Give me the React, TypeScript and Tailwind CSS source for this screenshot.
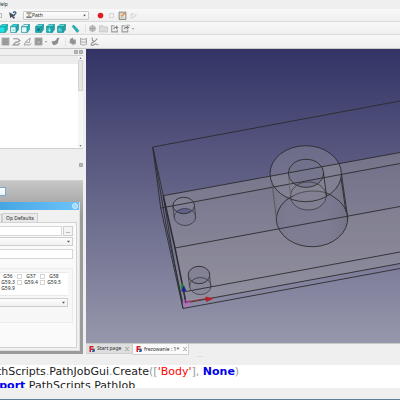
import type { ReactNode } from 'react'

function ToolButton({ label, children }: { label: string; children: ReactNode }) {
  return (
    <button type="button" aria-label={label} className="flex w-[9px] shrink-0 justify-center">
      <svg viewBox="0 0 16 16" aria-hidden className="h-[9px] w-[9px] shrink-0">
        {children}
      </svg>
    </button>
  )
}

function Separator() {
  return <span className="h-2 w-px shrink-0 bg-[#e2e2e2]" />
}

// Isometric cube, one face painted in the light colour
function Cube({ face }: { face: 'all' | 'front' | 'top' | 'right' | 'rear' | 'bottom' | 'left' }) {
  const on = '#22e3e6'
  const off = '#e4fafa'
  const dark = '#128a92'
  const front = face === 'all' ? on : face === 'top' || face === 'right' ? off : '#1fb3b8'
  const top = face === 'top' || face === 'all' ? on : face === 'right' ? off : '#5fe0e2'
  const side = face === 'right' || face === 'all' ? '#14c9ce' : '#2aa4a9'
  return (
    <g stroke={dark} strokeWidth="1.2" strokeLinejoin="round">
      <path d="M1 5 5 1h10l-4 4z" fill={top} />
      <path d="M1 5h10v10H1z" fill={front} />
      <path d="m11 5 4-4v9l-4 5z" fill={side} />
      {face === 'rear' && <path d="M4 8h4v4H4z" fill="#0a666d" />}
      {face === 'bottom' && <path d="M3 11h6M6 7v7" stroke="#b9f6f5" />}
      {face === 'left' && <path d="M4 7v6M7 9v4" stroke="#b9f6f5" />}
      {face === 'top' && <path d="M4 11h4" stroke="#22c3c6" />}
    </g>
  )
}

function MenuAndToolbars() {
  return (
    <header className="shrink-0">
      <nav className="flex h-[9px] items-center bg-[#efefef]">
        <a href="#help" className="-ml-[3px]">Help</a>
      </nav>

      <div className="flex h-[13px] items-center border-b border-[#dadada] bg-linear-to-b from-[#f8f8f8] to-[#efefef]">
        <span className="h-[5px] w-0.5 border-y border-r border-[#bbb]" />
        <div className="ml-1.5">
          <ToolButton label="What's this?">
            <path d="m2 2 2 11 3-3 3 4 2-2-3-3 4-1z" fill="#4a5058" />
            <path d="M9 3c1-2 6-2 5 1 0 2-3 1-3 4M11 10v2" fill="none" stroke="#285080" strokeWidth="2" />
          </ToolButton>
        </div>
        <div className="relative ml-1.5 flex h-[9px] w-[66px] items-center rounded-[1px] border border-[#cacaca] bg-linear-to-b from-[#fdfdfd] to-[#f0f0f0]">
          <svg viewBox="0 0 16 16" className="pointer-events-none absolute left-0.5 h-[6px] w-[6px]">
            <path d="M1 1h14v3H1zM1 12h14v3H1z" fill="#555" />
            <path d="M5 4h6v3H5z" fill="#d79b3e" />
            <path d="m5 7 3 5 3-5z" fill="#8b99a5" />
          </svg>
          <select aria-label="Workbench" className="h-[7px] w-full appearance-none pl-2 text-[5px] leading-[7px]">
            <option>Path</option>
          </select>
          <svg viewBox="0 0 16 16" className="pointer-events-none absolute right-0.5 h-[3px] w-[3px]">
            <path d="M1 4h14l-7 9z" fill="#444" />
          </svg>
        </div>
        <div className="ml-[7px] flex items-center gap-0.5">
          <ToolButton label="Record macro">
            <circle cx="8" cy="8" r="5" fill="#e01b24" />
          </ToolButton>
          <ToolButton label="Stop recording">
            <path d="M4.500 4.500h7v7h-7z" fill="#f6f6f6" stroke="#d0d0d0" strokeWidth="1.500" />
          </ToolButton>
          <ToolButton label="Edit macro">
            <path d="M2 2h12v13H2z" fill="#e6e6e2" stroke="#77776f" strokeWidth="1.500" />
            <path d="M4 5h6M4 8h4M4 12h7" stroke="#aaa" />
            <path d="m6 10 7-7" stroke="#f08b25" strokeWidth="2.500" />
          </ToolButton>
          <ToolButton label="Run macro">
            <path d="m4 4 9 4-9 5z" fill="#f2f2f2" stroke="#d0d0d0" strokeWidth="1.500" />
          </ToolButton>
        </div>
      </div>

      <div className="flex h-[13px] items-center border-b border-[#dadada] bg-linear-to-b from-[#f8f8f8] to-[#efefef]">
        <div className="-ml-px flex gap-0.5">
          <ToolButton label="Front"><Cube face="all" /></ToolButton>
          <ToolButton label="Top"><Cube face="top" /></ToolButton>
          <ToolButton label="Right"><Cube face="right" /></ToolButton>
        </div>
        <div className="ml-[5px] flex gap-0.5">
          <ToolButton label="Rear"><Cube face="rear" /></ToolButton>
          <ToolButton label="Bottom"><Cube face="bottom" /></ToolButton>
          <ToolButton label="Left"><Cube face="left" /></ToolButton>
        </div>
        <div className="ml-[5px] flex items-center gap-[5px]">
          <ToolButton label="Measure">
            <path d="m2 4 3-2 9 10-3 3z" fill="#17c5ca" stroke="#0d7880" strokeWidth="1" />
            <path d="m8 5-2 2M11 8l-2 2" stroke="#0d7880" />
          </ToolButton>
          <Separator />
        </div>
        <div className="ml-0.5 flex items-center gap-0.5">
          <ToolButton label="Job">
            <path d="m8 1 6 4v6l-6 4-6-4V5z" fill="#c4c4c4" />
            <path d="M5 5v7M8 3v10M11 5v7M3 8h10" stroke="#999" />
          </ToolButton>
          <ToolButton label="Group">
            <path d="M1 3h6l1 2h7v9H1z" fill="#dcdcdc" stroke="#bababa" />
          </ToolButton>
          <ToolButton label="Export">
            <path d="M8 3H3v11h10v-4" fill="none" stroke="#9a9a9a" strokeWidth="2" />
            <path d="M6 10c0-4 2-5 5-5V2l4 4-4 4V7c-2 0-3 1-5 3z" fill="#858585" />
          </ToolButton>
          <ToolButton label="Make link">
            <path d="M8 3H2v11h10v-4" fill="none" stroke="#9a9a9a" strokeWidth="2" />
            <path d="M5 10c0-4 2-5 5-5V2l5 4-5 4V7c-2 0-3 1-5 3z" fill="#858585" />
            <path d="M10 2h5v2" stroke="#777" fill="none" />
          </ToolButton>
          <span className="text-[4px] text-[#999]">▾</span>
        </div>
      </div>

      <div className="flex h-[14px] items-center border-b border-[#c8c8c8] bg-linear-to-b from-[#f8f8f8] to-[#efefef] pl-px">
        <div className="flex items-center gap-0.5">
          <ToolButton label="Pocket">
            <path d="M1 1h14v14H1z" fill="#a9a9a9" />
            <path d="M3 4h10M3 7h10M3 10h10M3 13h10" stroke="#808080" />
          </ToolButton>
          <ToolButton label="Contour">
            <path d="M2 3h8l4 3-4 3H7l-5 5h9l3-3" fill="none" stroke="#949494" strokeWidth="2" />
          </ToolButton>
          <ToolButton label="Engrave">
            <path d="M13 2 5 8l-3 6h10l3-3M5 9l6 1 2-8" fill="none" stroke="#949494" strokeWidth="1.500" />
          </ToolButton>
          <ToolButton label="Pocket 3D">
            <path d="M1 1h14v14H1z" fill="#a3a3a3" />
            <path d="M4 4h8M4 7h8v5H4z" fill="#b4b4b4" stroke="#808080" />
          </ToolButton>
          <span className="w-1 text-[4px] text-[#999]">▾</span>
          <ToolButton label="Surface">
            <path d="M1 7c4 1 7 0 9-3V2l5-1-2 6c0 5-5 8-9 7l-2-3z" fill="#8d8d8d" />
          </ToolButton>
        </div>
        <div className="ml-[5px] flex items-center gap-0.5">
          <Separator />
          <ToolButton label="Inspect">
            <path d="m3 4 6-3v4l5-1v9l-3-1v3l-4-2-6-4 3-1z" fill="#a0a0a0" />
            <path d="M5 4h5M3 7h9M6 10h7" stroke="#777" />
          </ToolButton>
          <ToolButton label="Simulator">
            <path d="M2 2c3 3 9 3 12 0M2 7c3 3 9 3 12 0M2 12c3 3 9 3 12 0M3 2v11M13 2v11" fill="none" stroke="#999" strokeWidth="1.500" />
          </ToolButton>
          <ToolButton label="Toolbits">
            <path d="M4 1v5l4 2-5 3-1 3 3 1 4-3 6 2M13 3 8 8" fill="none" stroke="#8c8c8c" strokeWidth="1.800" />
          </ToolButton>
        </div>
      </div>
    </header>
  )
}

function DockButton({ label }: { label: string }) {
  return (
    <button type="button" aria-label={label} className="block h-1 w-1">
      <svg viewBox="0 0 8 8" className="block h-1 w-1">
        <path d="M1 1h6v6H1z" fill="#ddd" stroke="#909090" strokeWidth="1.500" />
        <path d="m2 2 4 4m0-4L2 6" stroke="#909090" />
      </svg>
    </button>
  )
}

function TreeDock() {
  return (
    <section className="mr-[3px] shrink-0">
      <div className="flex h-[7px] items-center justify-end gap-px border-b border-[#d4d4d4]">
        <DockButton label="Float tree view" />
        <DockButton label="Close tree view" />
      </div>
      <div className="flex h-[93px] border-b border-[#d0d0d0]">
        <div className="flex min-w-0 flex-1 flex-col">
          <div className="h-2 bg-[#ededed]" />
          <div className="flex-1 bg-white" />
        </div>
        <div className="flex w-[5px] flex-col items-center bg-[#f6f6f6]">
          <svg viewBox="0 0 8 8" className="h-1 w-[3px]"><path d="m1 6 3-4 3 4z" fill="#555" /></svg>
          <div className="h-[31px] w-[5px] border border-[#d2d2d2] bg-[#e5e5e5]" />
          <svg viewBox="0 0 8 8" className="mt-auto h-1 w-[3px]"><path d="m1 2 3 4 3-4z" fill="#555" /></svg>
        </div>
      </div>
      <div className="flex h-[31px] items-center justify-end">
        <DockButton label="Close task view" />
      </div>
    </section>
  )
}

function CoordCell({ name }: { name: string }) {
  return (
    <label className="flex h-[6px] items-center gap-0.5">
      <input
        type="checkbox"
        className="h-[5px] w-[5px] shrink-0 appearance-none border border-[#d6d6d6] bg-white"
      />
      <span className="w-[14px] text-center leading-[6px]">{name}</span>
    </label>
  )
}

function DropDown({ label }: { label: string }) {
  return (
    <div className="relative">
      <select aria-label={label} className="block h-[9px] w-full appearance-none rounded-r-[1px] border border-l-0 border-[#cecece] bg-linear-to-b from-[#fdfdfd] to-[#f0f0f0]" />
      <svg viewBox="0 0 8 8" className="pointer-events-none absolute top-[3px] right-[3px] h-[3px] w-[3px]">
        <path d="M0 2h8L4 7z" fill="#555" />
      </svg>
    </div>
  )
}

function TaskDock() {
  return (
    <section className="mr-[3px] flex flex-1 flex-col border-t border-[#d0d0d0] bg-linear-to-b from-[#c6c6c6] to-[#9b9b9b] to-20% pr-[3px] pb-[3px]">
      <div className="flex h-[21px] items-center">
        <button type="button" aria-label="OK" className="h-[9px] w-[6px] border border-l-0 border-[#77abc7] bg-linear-to-b from-white to-[#e7f2f8]" />
      </div>
      <div className="flex flex-1 flex-col border-r border-b border-[#ddd] bg-[#f1f1f1]">
        <div className="flex h-2 items-center justify-end bg-linear-to-r from-[#45a6e3] to-[#6bc3fa] pr-px">
          <button type="button" aria-label="Collapse" className="block">
            <svg viewBox="0 0 12 12" className="block h-[6px] w-[6px]">
              <circle cx="6" cy="6" r="5" fill="#82cdfa" stroke="#fff" strokeWidth="1.500" />
              <path d="m4 6 2-2 2 2M4 9l2-2 2 2" stroke="#fff" fill="none" />
            </svg>
          </button>
        </div>
        <div className="flex h-3 items-end" role="tablist">
          <span className="h-2 w-0.5 border border-b-0 border-l-0 border-[#ccc]" />
          <button type="button" role="tab" className="h-[9px] w-9 border border-b-0 border-[#cfcfcf] bg-[#e9e9e9] leading-[9px] whitespace-nowrap">
            Op Defaults
          </button>
        </div>
        <div className="mr-0.5 mb-0.5 flex-1 border border-l-0 border-[#d2d2d2] bg-[#fafafa] pr-[3px]">
          <div className="mt-[3px] flex gap-px">
            <input type="text" aria-label="Output file" className="h-[10px] min-w-0 flex-1 border border-l-0 border-[#d6d6d6] bg-white" />
            <button type="button" className="h-[10px] w-[10px] border border-[#cfcfcf] bg-[#f4f4f4] leading-2">...</button>
          </div>
          <div className="mt-px"><DropDown label="Processor" /></div>
          <input type="text" aria-label="Arguments" className="mt-[3px] block h-[10px] w-full border border-l-0 border-[#d6d6d6] bg-white" />
          <div className="mt-[9px] h-[55px] border border-l-0 border-[#ececec] bg-[#f7f7f7] pt-[3px] pr-1">
            <div className="h-6 overflow-hidden border-y border-[#eaeaea] bg-white">
              <div className="-ml-[6px] grid grid-cols-[repeat(3,23px)]">
                <CoordCell name="G56" />
                <CoordCell name="G57" />
                <CoordCell name="G58" />
                <CoordCell name="G59.3" />
                <CoordCell name="G59.4" />
                <CoordCell name="G59.5" />
                <CoordCell name="G59.9" />
              </div>
            </div>
            <div className="mt-0.5"><DropDown label="Order by" /></div>
          </div>
        </div>
      </div>
    </section>
  )
}

function Viewport() {
  return (
    <svg
      viewBox="86 49 314 294"
      preserveAspectRatio="xMinYMin slice"
      role="img"
      aria-label="3D view of the model"
      className="block min-h-0 w-full flex-1"
    >
      <defs>
        <linearGradient id="sky" x1="0" y1="0" x2="0" y2="1">
          <stop offset="0" stopColor="#333366" />
          <stop offset="1" stopColor="#9797ac" />
        </linearGradient>
        <linearGradient id="wall" x1="0" y1="0" x2="1" y2="0">
          <stop offset="0" stopColor="#77767f" stopOpacity="0.65" />
          <stop offset="0.300" stopColor="#85859a" stopOpacity="0.350" />
          <stop offset="0.700" stopColor="#85859a" stopOpacity="0.250" />
          <stop offset="1" stopColor="#6d6c77" stopOpacity="0.700" />
        </linearGradient>
      </defs>
      <path d="M86 49h314v295H86z" fill="url(#sky)" />

      {/* stock and plate faces */}
      <path d="M163.300 195.700 400 152.500V263.500L185 303z" fill="#a19f9c" fillOpacity="0.360" />
      <path d="M163.300 195.700 400 152.500V163.500L165 207z" fill="#8b8997" fillOpacity="0.120" />
      <path d="m175 248 225-41.500V252l-214 39.500z" fill="#9c9492" fillOpacity="0.140" />

      {/* hub */}
      <ellipse cx="305.700" cy="173.700" rx="35.700" ry="28" fill="#8e8d9a" fillOpacity="0.420" />
      <path d="M271 180 276.300 218a35.700 28 0 0 0 71.400 0L341.400 173.700a35.700 28 0 0 1-70.400 6z" fill="url(#wall)" />
      <ellipse cx="312" cy="218.500" rx="35.700" ry="28.200" fill="#74748f" fillOpacity="0.400" />
      <path d="M288.500 173.500a17.500 14 0 0 1 35 0l3 23a18 14 0 0 1-36 0z" fill="#878591" fillOpacity="0.550" />
      <ellipse cx="306" cy="173.300" rx="17.500" ry="14" fill="#65658a" fillOpacity="0.450" />

      {/* screw holes */}
      <path d="m172.700 206 1.600 12a10.800 8.500 0 0 0 21.400 0l-1.400-12z" fill="#777892" fillOpacity="0.500" />
      <ellipse cx="183.700" cy="205.500" rx="10.800" ry="8.200" fill="#88879a" fillOpacity="0.400" />
      <path d="M175.500 211c4-3.500 12-3.500 16 0-4 3.500-12 3.500-16 0z" fill="#60608b" />
      <ellipse cx="199" cy="275" rx="10.800" ry="8.700" fill="#77778f" fillOpacity="0.450" />
      <path d="m188.500 276 1.300 10a10.800 8.700 0 0 0 21.200 0l-1-10z" fill="#7b7b94" fillOpacity="0.350" />

      <g fill="none" stroke="#2b2b2f" strokeWidth="0.900">
        <path d="M152.700 147 400 101" />
        <path d="M163.300 195.700 400 152.500M161 208l239-44.500" />
        <path d="M175 248 400 206.500M186 291.500 400 252M185 303l215-39.500M183 308.500l217-40" />
        <path d="m152.700 147 8 61 22.300 100.500M152.700 147l10.600 48.700" />
        <path d="M153.500 150 166 225l17 79" />
        <path d="m163.300 195.700 11.700 52.300 11 55" strokeWidth="1.500" />
        <path d="m163.300 195.700 8 50 11.700 62.800" />
        <ellipse cx="305.700" cy="173.700" rx="35.700" ry="28" />
        <path d="M276.300 220a35.700 28.200 0 1 0 71.400-3c-1-8-6-17-21-24" />
        <path d="M276.300 220c0-10 7-20 17-24" />
        <path d="M293 196c10-6 24-6 34-3" stroke="#4b4b50" />
        <path d="m341.400 173.700 6.300 44M341 178l5 34" />
        <path d="m272 183 4.300 35" stroke="#55555e" />
        <ellipse cx="306" cy="173.300" rx="17.700" ry="14" />
        <ellipse cx="308.300" cy="196" rx="18" ry="14" stroke="#404044" />
        <path d="m323.500 173 3 23" />
        <path d="m288.500 176 2 19" stroke="#66656e" />
        <ellipse cx="183.700" cy="205.500" rx="10.800" ry="8.200" />
        <ellipse cx="185" cy="217" rx="10.700" ry="8.500" stroke="#414148" />
        <path d="m172.800 206 1.500 12m20.200-12 1.200 12" stroke="#414148" />
        <ellipse cx="199" cy="275" rx="10.800" ry="8.700" />
        <ellipse cx="200.300" cy="286" rx="10.700" ry="8.500" stroke="#414148" />
        <path d="m188.300 276 1.300 11m20-11 1.300 11" stroke="#414148" />
      </g>

      {/* origin axes */}
      <circle cx="186.500" cy="303" r="4" fill="#b56fbd" fillOpacity="0.700" />
      <path d="m185.500 302 21-3.500" stroke="#9b2b38" strokeWidth="0.900" />
      <path d="m205.500 296.500 8.500 2-8 3.500z" fill="#b31f28" />
      <path d="m180.500 290 1-8 2.500 6z" fill="#188f28" />
      <path d="m181.300 291.500 2.500-6.500 2.700 6.500z" fill="#1c1c9d" />
      <path d="m184 291 1.500 12" stroke="#34344a" />
    </svg>
  )
}

function DocTab({ title, active = false }: { title: string; active?: boolean }) {
  return (
    <div
      className={`flex items-center gap-1 border-r border-b border-[#cfcfcf] pl-[3px] ${active ? 'h-[11px] w-14 bg-[#fafafa]' : 'h-[10px] w-[47px] bg-[#dedede]'}`}
    >
      <button type="button" role="tab" aria-selected={active} className="flex items-center gap-0.5 whitespace-nowrap">
        <svg viewBox="0 0 12 12" className="h-[6px] w-[6px]">
          <path d="M1 0h8v3H4v2h4v3H4v4H1z" fill="#d2202a" />
          <path d="M8 5h3v2h1v3h-1v2H6v-3h2z" fill="#315f9e" />
        </svg>
        {title}
      </button>
      <button type="button" aria-label={`Close ${title}`}>
        <svg viewBox="0 0 8 8" className="block h-1 w-1">
          <path d="m1 1 6 6m0-6L1 7M0 1h3M5 1h3M0 7h3M5 7h3" stroke="#888" strokeWidth="1" />
        </svg>
      </button>
    </div>
  )
}

function PythonConsole() {
  return (
    <section className="h-[23px] shrink-0 overflow-hidden bg-white font-['DejaVu_Sans',sans-serif] text-[11px] leading-[14px] text-[#1c1c1c]">
      <pre className="-ml-4 font-[inherit]">
        PathScripts<i className="text-[#999] not-italic">.</i>PathJobGui<i className="text-[#999] not-italic">.</i>Create
        <span className="text-[#999]">([</span>
        <span className="text-[#ff0000]">'Body'</span>
        <span className="text-[#999]">], </span>
        <b className="text-[#0000ee]">None</b>
        <span className="text-[#999]">)</span>
      </pre>
      <pre className="-ml-4 font-[inherit]">
        <b className="text-[#0000ee]">import</b> PathScripts<i className="text-[#999] not-italic">.</i>PathJob
      </pre>
    </section>
  )
}

export default function App() {
  return (
    <div className="flex min-h-screen flex-col overflow-hidden bg-[#efefef] font-['Noto_Sans',sans-serif] text-[5px] leading-[7px] text-[#2a2a2a]">
      <MenuAndToolbars />
      <main className="flex flex-1">
        <aside className="flex w-[86px] shrink-0 flex-col">
          <TreeDock />
          <TaskDock />
        </aside>
        <div className="flex min-w-0 flex-1 flex-col">
          <div className="flex min-h-0 flex-1 basis-0 flex-col border-b border-[#c8c8c8]">
            <Viewport />
          </div>
          <div className="flex h-[10px] shrink-0 items-start" role="tablist">
            <DocTab title="Start page" />
            <DocTab title="frezowanie : 1*" active />
          </div>
        </div>
      </main>
      <div className="flex h-[11px] shrink-0 items-start justify-center">
        <span className="mt-0.5 h-px w-[6px] bg-[#ddd]" />
      </div>
      <PythonConsole />
      <footer className="h-3 shrink-0 border-b border-[#5b7f9e]" />
    </div>
  )
}
